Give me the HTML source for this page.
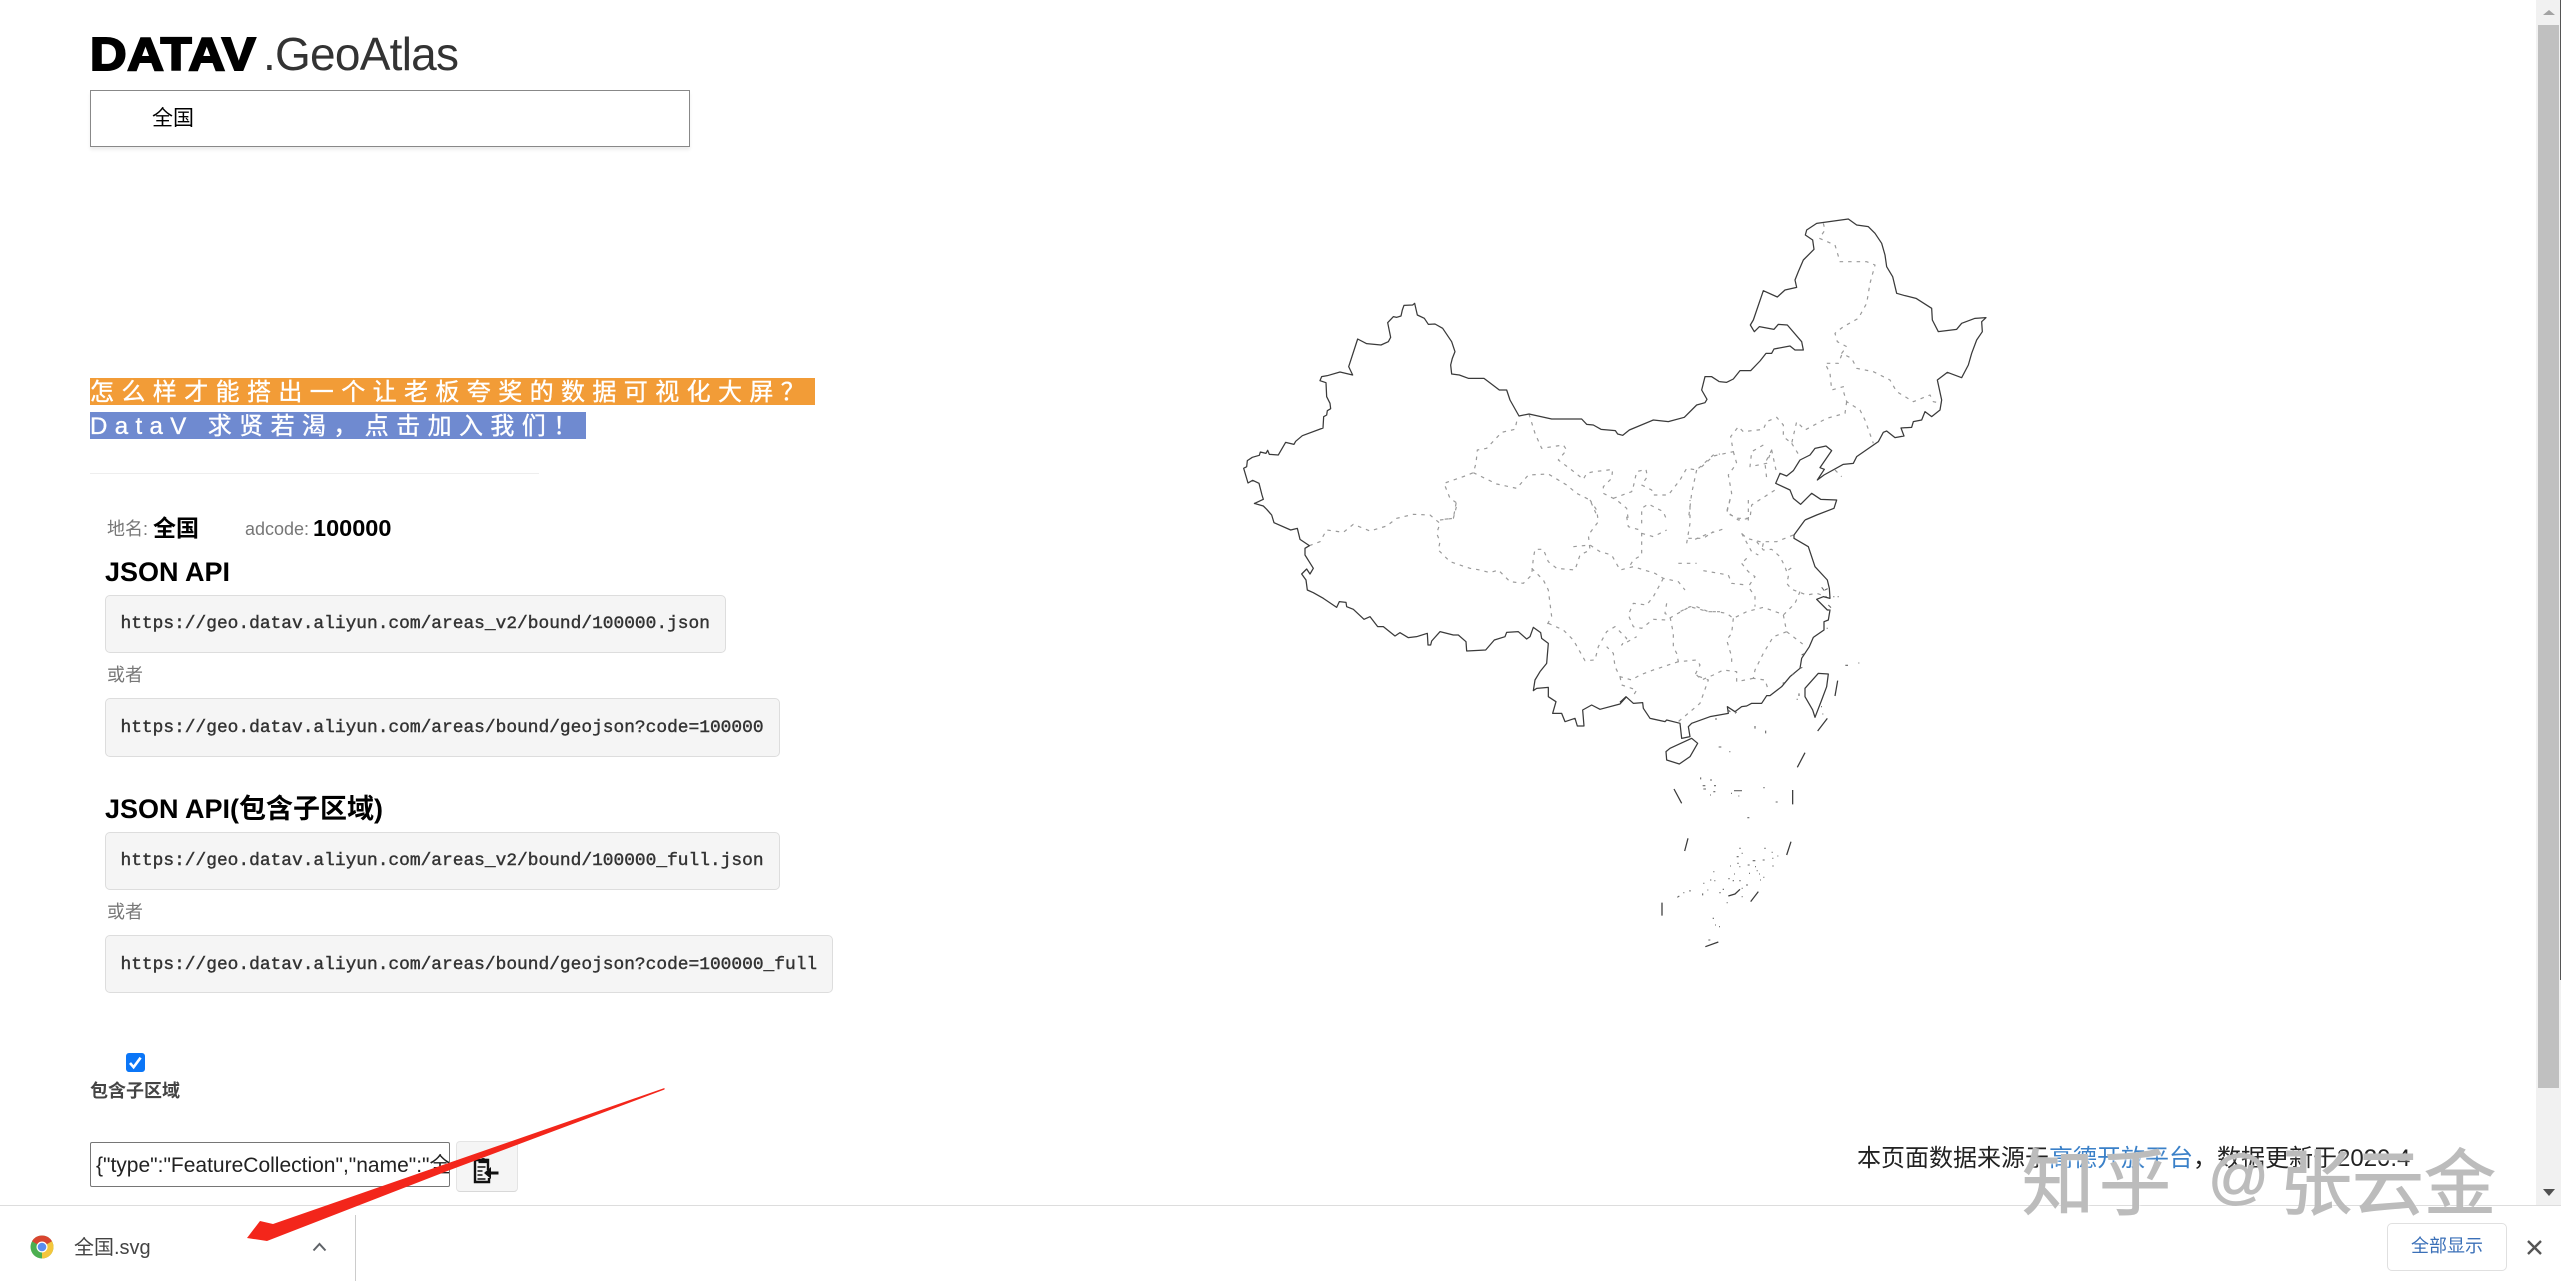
<!DOCTYPE html>
<html lang="zh">
<head>
<meta charset="utf-8">
<title>DATAV.GeoAtlas</title>
<style>
html,body{margin:0;padding:0;background:#fff;}
body{position:relative;width:2561px;height:1281px;overflow:hidden;font-family:"Liberation Sans","Noto Sans CJK SC",sans-serif;color:#000;}
.a{position:absolute;white-space:nowrap;}
.code{position:absolute;left:105px;box-sizing:border-box;background:#f5f5f5;border:1.5px solid #ddd;border-radius:5px;font-family:"Liberation Mono","Noto Sans CJK SC",monospace;font-size:17.87px;color:#333;padding-left:14.5px;white-space:nowrap;overflow:hidden;-webkit-text-stroke:.4px #333;}
.h{position:absolute;left:105px;font-size:27px;font-weight:bold;white-space:nowrap;line-height:30px;}
.g{position:absolute;color:#777;font-size:18px;white-space:nowrap;line-height:24px;}
.wm{color:#bcbcbc;-webkit-text-stroke:1px #bcbcbc;text-shadow:1px 1px 2px rgba(255,255,255,.9);font-family:'Noto Sans CJK SC','Liberation Sans',sans-serif;}
svg{position:absolute;left:0;top:0;overflow:visible;}
</style>
</head>
<body>

<!-- logo -->
<div class="a" style="left:90px;top:26px;line-height:56px;font-size:46px;font-weight:bold;letter-spacing:.6px;-webkit-text-stroke:2px #000;transform:scaleX(1.1);transform-origin:0 50%;">DATAV</div>
<div class="a" style="left:263px;top:26px;line-height:56px;font-size:46px;letter-spacing:-.75px;color:#333;">.GeoAtlas</div>

<!-- select -->
<div class="a" style="left:90px;top:90px;width:600px;height:57px;box-sizing:border-box;border:1.5px solid #888;box-shadow:0 3px 3px #eee;background:#fff;"></div>
<div class="a" style="left:152px;top:105px;font-size:21px;line-height:28px;">全国</div>

<!-- banners -->
<div class="a" style="left:90px;top:378px;width:725px;height:27px;background:#f29c37;color:#fff;font-size:24px;line-height:30px;letter-spacing:7.4px;overflow:hidden;-webkit-text-stroke:.35px #fff;">怎么样才能搭出一个让老板夸奖的数据可视化大屏？</div>
<div class="a" style="left:90px;top:412px;width:496px;height:27px;background:#6f8ad0;color:#fff;font-size:24px;line-height:29px;letter-spacing:7.4px;overflow:hidden;-webkit-text-stroke:.35px #fff;">DataV 求贤若渴，点击加入我们！</div>
<div class="a" style="left:90px;top:473px;width:449px;height:1px;background:#eee;"></div>

<!-- info -->
<div class="g" style="left:107px;top:517px;">地名:</div>
<div class="a" style="left:153px;top:513px;font-size:23px;font-weight:bold;line-height:30px;">全国</div>
<div class="g" style="left:245px;top:517px;">adcode:</div>
<div class="a" style="left:313px;top:513px;font-size:23.5px;font-weight:bold;line-height:30px;">100000</div>

<div class="h" style="top:557px;">JSON API</div>
<div class="code" style="top:595px;width:621px;height:58px;line-height:57px;">https://geo.datav.aliyun.com/areas_v2/bound/100000.json</div>
<div class="g" style="left:107px;top:663px;">或者</div>
<div class="code" style="top:698px;width:675px;height:59px;line-height:58px;">https://geo.datav.aliyun.com/areas/bound/geojson?code=100000</div>

<div class="h" style="top:794px;">JSON API(包含子区域)</div>
<div class="code" style="top:832px;width:675px;height:58px;line-height:57px;">https://geo.datav.aliyun.com/areas_v2/bound/100000_full.json</div>
<div class="g" style="left:107px;top:900px;">或者</div>
<div class="code" style="top:935px;width:728px;height:58px;line-height:59px;">https://geo.datav.aliyun.com/areas/bound/geojson?code=100000_full</div>

<!-- checkbox -->
<div class="a" style="left:126px;top:1053px;width:19px;height:19px;background:#0b76f7;border-radius:3px;"></div>
<svg width="2561" height="1281"><path d="M130 1063l3.600 4.200 7-9.500" fill="none" stroke="#fff" stroke-width="2.600"/></svg>
<div class="a" style="left:90px;top:1079px;font-size:18px;font-weight:bold;color:#444;line-height:24px;">包含子区域</div>

<!-- textarea + button -->
<div class="a" style="left:90px;top:1142px;width:360px;height:45px;box-sizing:border-box;border:1.5px solid #767676;border-radius:2px;background:#fff;overflow:hidden;font-size:21px;line-height:45px;padding-left:5px;color:#222;">{"type":"FeatureCollection","name":"全国"}</div>
<div class="a" style="left:456px;top:1141px;width:62px;height:51px;box-sizing:border-box;background:#f5f5f5;border:1.5px solid #e4e4e4;border-bottom-color:#d8d8d8;border-radius:4px;"></div>
<svg width="2561" height="1281" fill="none" stroke="#111">
  <path d="M488 1170v-10h-4.500M479 1160h-4v22h14v-4" stroke-width="2.400"/>
  <path d="M479 1161v-1.500h2.300a2.400 2.400 0 0 1 3.800 0h2v3h-8z" fill="#111" stroke-width="1.200"/>
  <path d="M477.500 1167h8M477.500 1171h5M477.500 1175h5M477.500 1179h8" stroke-width="1.600"/>
  <path d="M498.500 1173h-10" stroke-width="3"/>
  <path d="M491 1167l-7 6 7 6z" fill="#111" stroke="none"/>
</svg>

<!-- footer source -->
<div class="a" style="left:1857px;top:1143px;font-size:24px;line-height:32px;color:#222;">本页面数据来源于<span style="color:#3a80c8;">高德开放平台</span>，数据更新于2020.4</div>

<!-- map -->
<svg width="2561" height="1281" fill="none" stroke-linejoin="round">
  <!-- provincial dashed -->
  <g stroke="#9a9a9a" stroke-width="1.200" stroke-dasharray="3.500 5">
    <g transform="translate(1220,200) scale(.33333)">
      <path vector-effect="non-scaling-stroke" d="M927 642L945 700 965 745 1030 735 1040 750 1015 780 1055 810 1090 838 1100 820 1120 815 1150 812 1178 808 1175 835 1150 860 1150 880 1190 900 1220 925 1225 960"/>
      <path vector-effect="non-scaling-stroke" d="M890 665L885 688 845 697 800 745 772 750 768 790 760 818 735 828 672 850 690 895 712 910 700 955 670 958"/>
      <path vector-effect="non-scaling-stroke" d="M760 818L830 852 890 865 925 825 985 822 1040 855 1070 880 1110 900 1130 945"/>
      <path vector-effect="non-scaling-stroke" d="M1240 860L1250 815 1278 808 1282 830 1265 855 1295 870 1300 885 1345 885 1380 840 1400 805 1430 810 1480 765 1500 762"/>
      <path vector-effect="non-scaling-stroke" d="M1430 810L1415 880 1405 960"/>
      <path vector-effect="non-scaling-stroke" d="M1180 895L1235 875 1240 860"/>
    </g>
    <g transform="translate(1220,500) scale(.33333)">
      <path vector-effect="non-scaling-stroke" d="M268 137L300 125 320 90 370 97 400 73 450 93 500 78 530 55 580 43 630 45 660 70 650 100 660 125 655 150 690 185 750 205 780 210 810 218 835 210 870 245 910 250 935 225 940 175 945 148 970 148 985 185 1010 205 1065 210 1080 165 1110 150 1105 105 1135 65 1130 30 1110 0"/>
      <path vector-effect="non-scaling-stroke" d="M660 60L700 55 710 0"/>
      <path vector-effect="non-scaling-stroke" d="M935 205L970 240 985 270 995 350 975 385M985 370L1030 390 1060 420 1095 482 1125 480 1135 440 1160 395 1185 380 1220 415 1205 435 1250 410"/>
      <path vector-effect="non-scaling-stroke" d="M1060 140L1110 135 1140 155 1175 165 1200 210 1240 200 1305 220 1330 235 1375 245 1395 270"/>
      <path vector-effect="non-scaling-stroke" d="M1330 235L1300 290 1280 315 1240 310 1225 345 1240 380 1265 385 1300 358 1340 360 1365 345 1410 320 1465 335 1500 335"/>
      <path vector-effect="non-scaling-stroke" d="M1220 50L1225 80 1260 90 1265 100 1265 165 1240 180 1225 205M1265 100L1300 110 1340 90M1265 70L1265 25 1285 12 1330 35 1340 60"/>
      <path vector-effect="non-scaling-stroke" d="M1375 190L1430 190M1400 130L1410 70 1410 0M1405 115L1450 115 1480 95"/>
      <path vector-effect="non-scaling-stroke" d="M1340 310L1335 340 1350 350 1360 400 1360 440 1370 460 1375 485 1430 480 1440 495 1425 525 1465 540 1440 610 1375 665"/>
      <path vector-effect="non-scaling-stroke" d="M1375 485L1300 510 1260 525 1235 540 1200 530 1185 500 1180 460 1160 440M1200 530L1205 555 1250 570 1235 595"/>
    </g>
    <g transform="translate(1620,500) scale(.33333)">
      <path vector-effect="non-scaling-stroke" d="M520 105L470 125 420 125 380 115 365 100M385 0L385 75M330 0L320 40 355 55 385 55M307 88L255 105 225 118"/>
      <path vector-effect="non-scaling-stroke" d="M410 125L430 150 455 148 480 170 495 200 505 230 500 250 515 268 560 285 590 280 620 290M505 210L520 200"/>
      <path vector-effect="non-scaling-stroke" d="M540 275L525 310 490 345 480 340 430 322 380 335 340 355 320 340 290 335 265 335 230 320 210 320 170 340"/>
      <path vector-effect="non-scaling-stroke" d="M490 345L500 395 460 410 430 460 405 510 400 535 435 540 445 570M400 535L350 545 350 515 310 510 280 525 245 540 225 520"/>
      <path vector-effect="non-scaling-stroke" d="M340 355L335 400 320 420 335 470 335 495M500 395L548 432"/>
      <path vector-effect="non-scaling-stroke" d="M365 190L385 215 405 230 385 260 405 290 405 320M250 212L325 225 335 250 380 255M365 100L395 155 415 165M380 175L365 190M430 130L425 150"/>
    </g>
    <g transform="translate(1700,200) scale(.33333)">
      <path vector-effect="non-scaling-stroke" d="M370 70L375 90 358 115 405 135 420 185 500 185 525 195 510 250 500 310 475 355 430 380 405 400 412 425 440 440 425 460 455 475 470 505 520 515 570 540 590 575 640 605 690 585 700 605 725 610"/>
      <path vector-effect="non-scaling-stroke" d="M425 465L415 490 375 490 390 520 395 570 430 560 432 580 440 605 480 630 495 660 520 730M440 605L435 640 380 655 315 690 290 665 275 730 250 710 250 675 230 652 200 665 190 688 130 695 115 680 92 710 100 755 40 768 0 805"/>
      <path vector-effect="non-scaling-stroke" d="M275 730L300 770M100 755L110 790 85 825 95 880 80 935 115 960 150 955 155 915 225 870M190 735L155 755 150 800 200 790 215 750 195 790 200 835M215 750L230 820M405 810L425 830"/>
    </g>
  </g>
  <!-- outline -->
  <g stroke="#3a3a3a" stroke-width="1.250">
    <path transform="translate(1220,200) scale(.33333)" vector-effect="non-scaling-stroke" d="M102 911L130 898 126 885 117 850 98 841 84 849 71 805 80 800 82 782 97 772 118 766 121 756 138 760 143 751 148 763 175 765 197 727 222 733 227 724 247 707 309 684 311 650 320 645 322 632 332 626 330 610 320 590 318 548 300 542 305 530 322 527 360 516 398 525 386 500 413 417 440 431 483 435 505 425 512 412 503 368 520 350 530 352 543 348 547 330 552 316 578 315 584 310 592 345 613 355 625 373 645 372 668 385 695 425 705 455 697 475 692 495 695 522 718 525 745 535 792 535 838 570 860 570 870 600 897 648 927 642 995 657 1085 657 1100 673 1120 675 1143 688 1186 692 1193 702 1208 706 1228 690 1300 660 1345 665 1393 652 1430 615 1455 608 1461 598 1445 570 1455 530 1475 530 1498 545"/>
    <path transform="translate(1700,200) scale(.33333)" vector-effect="non-scaling-stroke" d="M58 545L80 547 100 537 120 512 152 512 180 483 198 460 215 460 222 447 270 438 285 450 310 450 305 425 262 375 235 373 222 388 178 380 163 395 151 375 160 360 190 272 232 291 255 270 290 262 285 240 295 215 310 180 342 148 338 120 316 105 320 90 350 70 445 57 470 75 505 80 525 100 545 130 555 165 560 200 578 230 590 280 615 287 648 295 695 325 697 360 715 395 770 388 785 370 825 355 858 353 845 365 847 395 830 420 815 460 805 495 785 533 742 517 712 540 725 600 720 630 695 650 675 635 665 660 640 665 635 682 603 684 612 708 585 713 560 693 550 697 535 725 470 770 460 790 430 793 372 825 352 840 373 808 360 803 395 752 378 738 345 745 330 765 300 780 280 812 260 828 240 820 227 850 270 870 280 895 302 913 335 880 362 898 410 900 402 925 350 945 315 960"/>
    <path transform="translate(1620,500) scale(.33333)" vector-effect="non-scaling-stroke" d="M555 60L522 105 522 115 565 140 585 200 622 240 628 265 630 295 610 290 590 298 622 330 630 330 625 360 612 365 612 390 580 412 568 440 545 475 540 505 510 530 485 560 450 587 440 587 425 610 395 610 380 618 365 620 345 635 322 620 325 640 270 650 215 670 205 680 210 710 185 715 180 670 140 660 135 665 90 655 70 625 68 608 40 610 18 590 0 607"/>
    <path transform="translate(1220,500) scale(.33333)" vector-effect="non-scaling-stroke" d="M1200 607L1218 592 1200 612 1140 628 1115 615 1088 630 1092 678 1072 678 1065 655 1035 665 1025 640 998 640 1008 605 985 590 985 562 950 565 940 572 945 540 960 515 980 490 985 430 965 415 962 398 940 382 930 410 920 417 895 395 860 397 855 410 823 420 797 450 740 453 738 425 715 405 700 405 660 395 635 423 632 435 624 435 622 400 590 410 565 413 540 398 525 408 490 380 473 380 450 350 432 358 400 328 380 320 378 307 358 305 350 322 310 295 280 278 262 270 258 240 245 222 260 207 270 222 280 205 255 165 255 145 268 137 240 118 232 85 212 90 162 68 155 45 140 28 130 18 102 10"/>
    <g transform="translate(1620,500) scale(.33333)">
      <path vector-effect="non-scaling-stroke" d="M150 745L215 715 233 730 210 770 178 792 140 780 138 755Z"/>
      <path vector-effect="non-scaling-stroke" d="M595 520L625 522 620 560 605 600 585 652 578 630 555 590 555 565Z"/>
    </g>
    <g transform="translate(1620,640) scale(.33333)">
      <path vector-effect="non-scaling-stroke" d="M622 235L593 273M653 122L645 168M555 338L532 382M518 450L518 493M513 605L500 645M415 755L392 785M204 595L194 633M126 788L126 827M162 447L185 490M256 920L295 906M325 768L345 762 360 748"/>
    </g>
  </g>
  <!-- islands -->
  <g stroke="#666" stroke-width="1.100">
    <path transform="translate(1620,640) scale(.33333)" vector-effect="non-scaling-stroke" d="M242 412v6M270 420h6M248 437h8M250 447h8M282 437h6M280 455h6M270 465h3M333 460h3M342 452h24M355 468h3M430 443h4M467 486h6M382 533h6M405 258v8M437 272v8M296 321h8M328 335h3M676 76h8M715 69h3M537 160v8M530 178h3M603 200h3M607 222h3M358 625h4M365 640h3M350 650h6M352 670h4M330 678h3M358 680h3M280 695h3M270 720h4M283 722h3M250 730h3M248 760v6M262 750h3M210 750v5M190 758h3M172 772l6-4M298 758h4M308 748h4M325 716h4M338 722h4M358 722h4M342 702h3M383 675h6M398 662h8M428 660h6M433 625h4M455 637h3M472 648h3M457 655h3M457 678h4M405 680h3M410 692h3M387 700h3M417 702h3M430 712h3M420 720h3M378 735h6M365 745h3M365 770h3M320 788h3M278 835h4M285 855h3M297 860h3M265 900h6"/>
    <path transform="translate(1620,500) scale(.33333)" vector-effect="non-scaling-stroke" d="M605 262l8 10M615 270l8 -4M625 315l8 8M628 330h4M640 290h3M653 290h3M545 465l7-4M540 505l7-3M516 525l6-4M488 550l6-2M345 640l5-4M325 630l6 6M285 657h6M620 385h3"/>
  </g>
</svg>

<!-- scrollbar -->
<div class="a" style="left:2536px;top:0;width:25px;height:1205px;background:#f1f1f1;"></div>
<div class="a" style="left:2538px;top:25px;width:21px;height:1063px;background:#c0c0c0;"></div>
<div class="a" style="left:2560px;top:0;width:1px;height:980px;background:#555;"></div>
<svg width="2561" height="1281"><path d="M2543 15l6-5 6 5z" fill="#a3a3a3"/><path d="M2543 1189l6 7 6-7z" fill="#505050"/></svg>

<!-- download bar -->
<div class="a" style="left:0;top:1205px;width:2561px;height:76px;background:#fff;border-top:1.5px solid #ddd;box-sizing:border-box;"></div>
<div class="a" style="left:354.500px;top:1215px;width:1.500px;height:66px;background:#ccc;"></div>
<svg width="2561" height="1281">
  <circle cx="42" cy="1247" r="11.500" fill="#4caf50"/>
  <path d="M42 1247L32 1241.300A11.500 11.500 0 0 1 52 1241.300Z" fill="#d9452f"/>
  <path d="M42 1247L52 1241.300A11.500 11.500 0 0 1 42 1258.500Z" fill="#f4c63c"/>
  <circle cx="42" cy="1247" r="5.500" fill="#fff"/>
  <circle cx="42" cy="1247" r="4.300" fill="#5b8def"/>
  <path d="M313.500 1250.500l6-6.500 6 6.500" fill="none" stroke="#5f6368" stroke-width="2"/>
</svg>
<div class="a" style="left:74px;top:1234px;font-size:20px;line-height:28px;color:#444;">全国.svg</div>
<div class="a" style="left:2387px;top:1223px;width:120px;height:48px;box-sizing:border-box;border:1.500px solid #e0e0e0;border-radius:5px;background:#fff;color:#3b70b8;font-size:18px;line-height:45px;text-align:center;">全部显示</div>
<svg width="2561" height="1281"><path d="M2528 1241l13 13M2541 1241l-13 13" stroke="#555" stroke-width="2.400" fill="none"/></svg>

<!-- red arrow -->
<svg width="2561" height="1281"><path d="M664.500 1088L450 1162.500 273 1224 260 1221 247 1238 267 1241 285 1234 450 1170 664.500 1089.500Z" fill="#f3261b"/></svg>

<!-- watermark -->
<div class="a wm" style="left:2022px;top:1130px;font-size:72px;line-height:96px;letter-spacing:5px;">知乎</div>
<div class="a wm" style="left:2208px;top:1132px;font-size:60px;line-height:90px;font-family:'Liberation Sans',sans-serif;">@</div>
<div class="a wm" style="left:2280px;top:1130px;font-size:72px;line-height:96px;">张云金</div>

</body>
</html>
